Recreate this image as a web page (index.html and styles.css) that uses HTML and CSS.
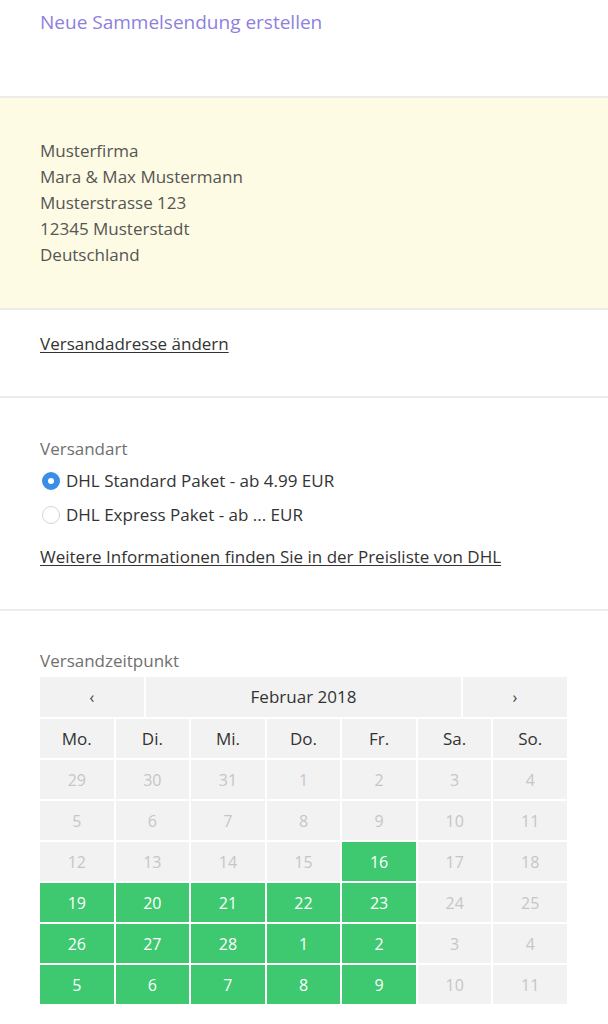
FILE: index.html
```html
<!DOCTYPE html>
<html lang="de">
<head>
<meta charset="utf-8">
<title>Neue Sammelsendung erstellen</title>
<link rel="stylesheet" href="styles.css">
</head>
<body>
<div class="page">
  <section class="section header">
    <h1 class="title">Neue Sammelsendung erstellen</h1>
  </section>

  <section class="section address">
    <div>Musterfirma</div>
    <div>Mara &amp; Max Mustermann</div>
    <div>Musterstrasse 123</div>
    <div>12345 Musterstadt</div>
    <div>Deutschland</div>
  </section>

  <section class="section change">
    <a class="link" href="#">Versandadresse ändern</a>
  </section>

  <section class="section shipping">
    <div class="label">Versandart</div>
    <div class="options">
      <label class="option"><span class="radio radio-on"></span>DHL Standard Paket - ab 4.99 EUR</label>
      <label class="option"><span class="radio"></span>DHL Express Paket - ab ... EUR</label>
    </div>
    <a class="link info" href="#">Weitere Informationen finden Sie in der Preisliste von DHL</a>
  </section>

  <section class="section schedule">
    <div class="label">Versandzeitpunkt</div>
    <div class="calendar">
      <div class="nav">
        <div class="cell nav-btn">‹</div>
        <div class="cell month">Februar 2018</div>
        <div class="cell nav-btn">›</div>
      </div>
      <div class="days">
        <div class="cell dow">Mo.</div><div class="cell dow">Di.</div><div class="cell dow">Mi.</div><div class="cell dow">Do.</div><div class="cell dow">Fr.</div><div class="cell dow">Sa.</div><div class="cell dow">So.</div>

        <div class="cell off">29</div><div class="cell off">30</div><div class="cell off">31</div><div class="cell off">1</div><div class="cell off">2</div><div class="cell off">3</div><div class="cell off">4</div>

        <div class="cell off">5</div><div class="cell off">6</div><div class="cell off">7</div><div class="cell off">8</div><div class="cell off">9</div><div class="cell off">10</div><div class="cell off">11</div>

        <div class="cell off">12</div><div class="cell off">13</div><div class="cell off">14</div><div class="cell off">15</div><div class="cell on">16</div><div class="cell off">17</div><div class="cell off">18</div>

        <div class="cell on">19</div><div class="cell on">20</div><div class="cell on">21</div><div class="cell on">22</div><div class="cell on">23</div><div class="cell off">24</div><div class="cell off">25</div>

        <div class="cell on">26</div><div class="cell on">27</div><div class="cell on">28</div><div class="cell on">1</div><div class="cell on">2</div><div class="cell off">3</div><div class="cell off">4</div>

        <div class="cell on">5</div><div class="cell on">6</div><div class="cell on">7</div><div class="cell on">8</div><div class="cell on">9</div><div class="cell off">10</div><div class="cell off">11</div>
      </div>
    </div>
  </section>
</div>
</body>
</html>
```

FILE: styles.css
```css
html, body {
  margin: 0;
  padding: 0;
  background: #ffffff;
}

body {
  font-family: "Open Sans", "Noto Sans", "DejaVu Sans", sans-serif;
  font-size: 17px;
  line-height: 26px;
  color: #333333;
}

.page {
  width: 608px;
}

.section {
  padding-left: 40px;
  padding-right: 40px;
  border-bottom: 2px solid #ececec;
}

.header {
  height: 98px;
  box-sizing: border-box;
  padding-top: 9px;
}

.title {
  margin: 0;
  font-size: 19px;
  font-weight: 400;
  line-height: 26px;
  color: #8d80e0;
}

.address {
  background: #fdfbe3;
  padding-top: 40px;
  padding-bottom: 40px;
  color: #555555;
}

.change {
  padding-top: 21px;
  padding-bottom: 39px;
}

.link {
  color: #333333;
  text-decoration: underline;
  text-underline-offset: 2px;
}

.shipping {
  padding-top: 38px;
  padding-bottom: 39px;
}

.label {
  color: #707070;
}

.options {
  display: flex;
  flex-direction: column;
  gap: 8px;
  margin-top: 6px;
}

.option {
  display: flex;
  align-items: center;
  gap: 6px;
  padding-left: 2px;
}

.radio {
  width: 18px;
  height: 18px;
  box-sizing: border-box;
  border-radius: 50%;
  border: 1px solid #d6d6d6;
  background: #ffffff;
  flex: none;
}

.radio-on {
  border: 6px solid #3a8ee8;
  background: #ffffff;
}

.info {
  display: inline-block;
  margin-top: 16px;
}

.schedule {
  border-bottom: none;
  padding-top: 37px;
  padding-bottom: 20px;
}

.calendar {
  margin-top: 3px;
  width: 527px;
  display: flex;
  flex-direction: column;
  gap: 2px;
}

.nav {
  display: grid;
  grid-template-columns: 104px 1fr 104px;
  gap: 2px;
  height: 40px;
}

.days {
  display: grid;
  grid-template-columns: repeat(7, 1fr);
  grid-auto-rows: 39px;
  gap: 2px;
}

.cell {
  background: #f2f2f2;
  display: flex;
  align-items: center;
  justify-content: center;
  font-size: 16px;
}

.nav-btn {
  font-size: 16px;
  color: #444444;
}

.month {
  font-size: 17px;
  color: #333333;
}

.dow {
  font-size: 17px;
  color: #333333;
}

.off {
  color: #c6c6c6;
}

.on {
  background: #3ec970;
  color: #ffffff;
}
```
